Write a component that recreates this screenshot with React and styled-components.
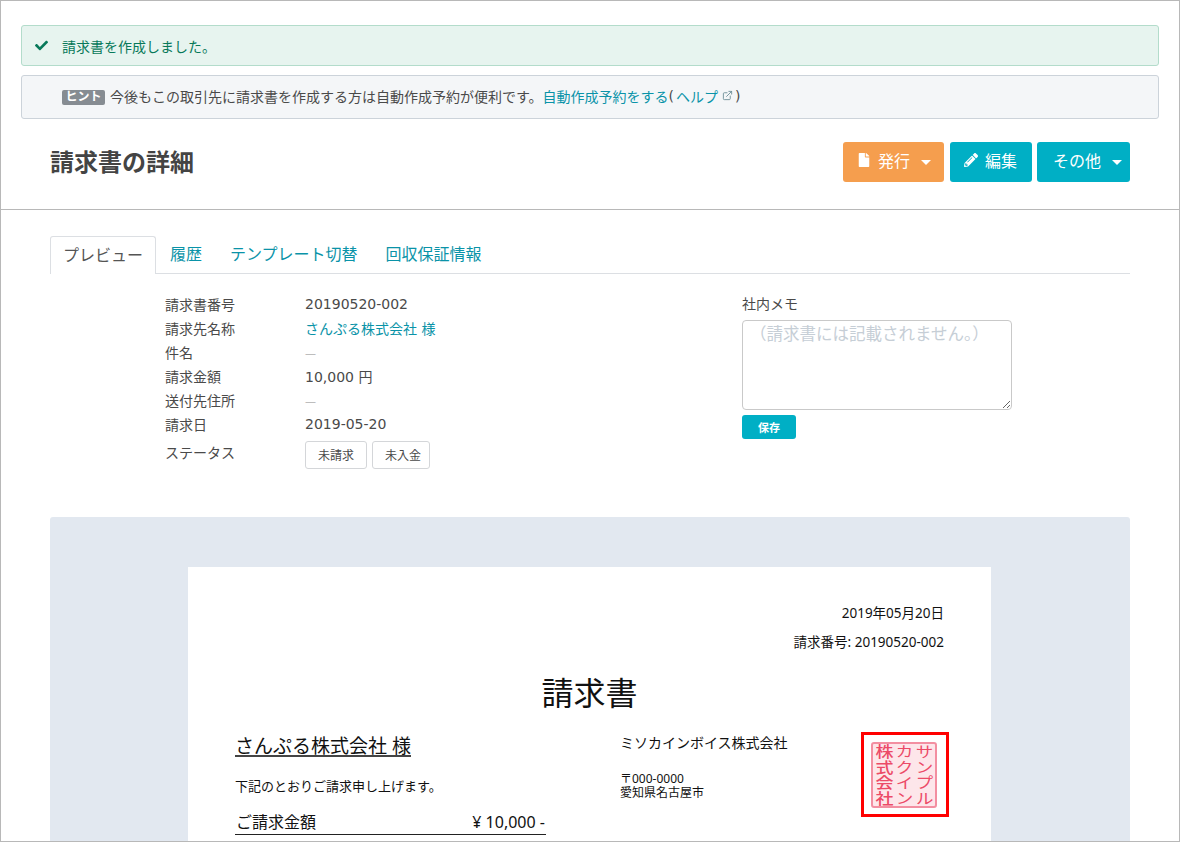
import styled, { createGlobalStyle } from 'styled-components';
import { FaCheck, FaFile, FaPencilAlt } from 'react-icons/fa';
import { ExternalLink } from 'lucide-react';

const GlobalStyle = createGlobalStyle`
  html, body {
    margin: 0;
    padding: 0;
    background: #fff;
  }
  body {
    font-family: "DejaVu Sans", "Noto Sans CJK JP", sans-serif;
    font-size: 14px;
    color: #4a4a4a;
  }
  * {
    box-sizing: border-box;
  }
`;

const Page = styled.div`
  width: 1180px;
  height: 842px;
  overflow: hidden;
  border: 1px solid #b8b8b8;
`;

const Top = styled.header`
  padding: 24px 20px 0;
  height: 209px;
  border-bottom: 1px solid #b8b8b8;
`;

const Alert = styled.div`
  display: flex;
  align-items: center;
  height: ${(p) => p.$height}px;
  margin-bottom: 9px;
  border-radius: 3px;
  font-size: 14px;
  border: 1px solid ${(p) => (p.$kind === 'success' ? '#b3dccb' : '#ccd3da')};
  background: ${(p) => (p.$kind === 'success' ? '#e7f4ef' : '#f4f6f8')};
  color: ${(p) => (p.$kind === 'success' ? '#08795a' : '#4a4a4a')};
  padding-left: ${(p) => (p.$kind === 'success' ? 13 : 40)}px;
  padding-bottom: ${(p) => (p.$kind === 'success' ? 0 : 3)}px;
`;

const CheckIcon = styled(FaCheck)`
  width: 13px;
  height: 13px;
  margin-right: 14px;
  color: #08795a;
`;

const HintBadge = styled.span`
  display: inline-block;
  background: #868c92;
  color: #fff;
  font-size: 12px;
  font-weight: 700;
  line-height: 15px;
  height: 15px;
  width: 43px;
  margin-top: 4px;
  text-align: center;
  border-radius: 2px;
  margin-right: 5px;
`;

const TextLink = styled.a`
  color: #0a93a8;
  text-decoration: none;
`;

const HelpLink = styled(TextLink)`
  margin-left: 2px;
`;

const ExternalIcon = styled(ExternalLink)`
  width: 11px;
  height: 11px;
  margin: 0 2px 0 4px;
  color: #6f8f98;
`;

const TitleRow = styled.div`
  display: flex;
  align-items: center;
  justify-content: space-between;
  padding: 14px 29px 0 29px;
`;

const Title = styled.h1`
  margin: 0 0 4px;
  font-size: 24px;
  font-weight: 700;
  color: #444;
`;

const Actions = styled.div`
  display: flex;
  gap: 5px;
`;

const Button = styled.button`
  display: flex;
  align-items: center;
  width: ${(p) => p.$width}px;
  height: 40px;
  border: 0;
  border-radius: 3px;
  margin-right: ${(p) => (p.$orange ? 1 : 0)}px;
  padding: 0 0 4px ${(p) => p.$left || 14}px;
  color: #fff;
  font-family: inherit;
  font-size: 16px;
  background: ${(p) => (p.$orange ? '#f59e4e' : '#00afc5')};
  svg {
    width: 14px;
    height: 14px;
    margin-right: 7px;
  }
`;

const Caret = styled.span`
  width: 0;
  height: 0;
  margin: 4px 0 0 11px;
  border-left: 5px solid transparent;
  border-right: 5px solid transparent;
  border-top: 5px solid #fff;
`;

const Body = styled.main`
  padding: 26px 49px 0;
`;

const Tabs = styled.nav`
  display: flex;
  height: 38px;
  border-bottom: 1px solid #dcdfe3;
`;

const Tab = styled.a`
  display: flex;
  align-items: center;
  height: ${(p) => (p.$active ? 38 : 37)}px;
  padding: 0 ${(p) => (p.$active ? 12 : 14)}px 3px;
  font-size: 16px;
  color: ${(p) => (p.$active ? '#555' : '#0a93a8')};
  background: #fff;
  border: ${(p) => (p.$active ? '1px solid #dcdfe3' : '0')};
  border-bottom: 0;
  border-radius: 3px 3px 0 0;
`;

const Summary = styled.section`
  display: flex;
  padding: 18px 0 0 115px;
  height: 243px;
`;

const Info = styled.dl`
  width: 577px;
  margin: 0;
  font-size: 14px;
`;

const InfoRow = styled.div`
  display: flex;
  align-items: center;
  height: 24px;
`;

const StatusRow = styled(InfoRow)`
  align-items: flex-start;
  height: 34px;
  margin-top: 5px;
`;

const InfoLabel = styled.dt`
  width: 140px;
`;

const StatusLabel = styled(InfoLabel)`
  line-height: 24px;
`;

const InfoValue = styled.dd`
  margin: 0;
  display: flex;
  gap: 5px;
`;

const Dash = styled.span`
  font-family: "Noto Sans", sans-serif;
  font-size: 11px;
  color: #8a8a8a;
  font-weight: 300;
`;

const Status = styled.span`
  display: flex;
  align-items: center;
  width: ${(p) => p.$width}px;
  height: 28px;
  padding: 0 0 1px 12px;
  font-size: 12px;
  border: 1px solid #d4d6d9;
  border-radius: 3px;
`;

const Memo = styled.div`
  display: flex;
  flex-direction: column;
  align-items: flex-start;
  font-size: 14px;
`;

const MemoLabel = styled.label`
  height: 24px;
  line-height: 24px;
  margin-bottom: 4px;
`;

const MemoInput = styled.textarea`
  width: 270px;
  height: 90px;
  padding: 0 7px;
  border: 1px solid #c9c9c9;
  border-radius: 4px;
  font-family: "Noto Sans CJK JP", sans-serif;
  font-size: 16.5px;
  margin-bottom: 5px;
  &::placeholder {
    color: #c6ced6;
  }
`;

const SaveButton = styled.button`
  width: 54px;
  height: 24px;
  border: 0;
  border-radius: 3px;
  background: #00afc5;
  color: #fff;
  font-family: inherit;
  font-size: 11px;
  font-weight: 700;
`;

const PreviewArea = styled.section`
  height: 330px;
  padding: 50px 139px 0 138px;
  background: #e2e8f0;
  border-radius: 3px 3px 0 0;
`;

const Sheet = styled.article`
  background: #fff;
  height: 280px;
  padding: 36px 47px 0;
  color: #111;
  font-family: "Noto Sans", "Noto Sans CJK JP", sans-serif;
`;

const SheetMeta = styled.p`
  margin: 0;
  height: 29px;
  text-align: right;
  font-size: 13.5px;
  line-height: 20px;
`;

const SheetTitle = styled.h2`
  margin: 9px 0 0;
  font-size: 32px;
  font-weight: 400;
  line-height: 46px;
  text-align: center;
`;

const Columns = styled.div`
  display: grid;
  grid-template-columns: 385px 1fr;
  margin-top: 16px;
`;

const Addressee = styled.div`
  display: flex;
  flex-direction: column;
  align-items: flex-start;
`;

const Customer = styled.h3`
  margin: 5px 0 0;
  font-size: 19px;
  font-weight: 400;
  line-height: 18px;
  border-bottom: 2px solid #444;
`;

const Greeting = styled.p`
  margin: 20px 0 0;
  font-size: 13px;
  line-height: 18px;
`;

const Amount = styled.div`
  display: flex;
  justify-content: space-between;
  width: 311px;
  margin-top: 15px;
  padding: 0 1px;
  font-size: 16px;
  line-height: 24px;
  border-bottom: 1px solid #222;
`;

const Issuer = styled.div`
  display: flex;
  justify-content: space-between;
  align-items: flex-start;
`;

const IssuerText = styled.div`
  padding-top: 2px;
`;

const IssuerName = styled.p`
  margin: 0 0 20px;
  font-size: 14px;
  line-height: 18px;
`;

const IssuerAddress = styled.p`
  margin: 0;
  font-size: 12px;
  line-height: 14px;
`;

const StampFrame = styled.div`
  display: flex;
  align-items: center;
  justify-content: center;
  width: 88px;
  height: 85px;
  margin-right: -5px;
  border: 3px solid #f00;
`;

const Stamp = styled.div`
  display: flex;
  flex-direction: row-reverse;
  justify-content: space-between;
  width: 66px;
  height: 66px;
  margin-right: 2px;
  padding: 0 1px;
  border: 2px solid #f38fa1;
  border-radius: 3px;
  background: #fde6ea;
`;

const StampLine = styled.span`
  writing-mode: vertical-rl;
  width: 20px;
  height: 62px;
  font-size: 15px;
  font-weight: ${(p) => (p.$heavy ? 500 : 400)};
  line-height: 20px;
  letter-spacing: 0.5px;
  color: #ec4a67;
  transform: scaleX(1.2);
`;

export default function App() {
  return (
    <Page>
      <GlobalStyle />
      <Top>
        <Alert $kind="success" $height={41}>
          <CheckIcon />
          請求書を作成しました。
        </Alert>
        <Alert $kind="hint" $height={44}>
          <HintBadge>ヒント</HintBadge>
          今後もこの取引先に請求書を作成する方は自動作成予約が便利です。
          <TextLink href="#">自動作成予約をする</TextLink>(
          <HelpLink href="#">ヘルプ</HelpLink>
          <ExternalIcon />)
        </Alert>
        <TitleRow>
          <Title>請求書の詳細</Title>
          <Actions>
            <Button $orange $width={101}>
              <FaFile />
              発行
              <Caret />
            </Button>
            <Button $width={82}>
              <FaPencilAlt />
              編集
            </Button>
            <Button $width={93} $left={16}>
              その他
              <Caret />
            </Button>
          </Actions>
        </TitleRow>
      </Top>
      <Body>
        <Tabs>
          <Tab $active>プレビュー</Tab>
          <Tab>履歴</Tab>
          <Tab>テンプレート切替</Tab>
          <Tab>回収保証情報</Tab>
        </Tabs>
        <Summary>
          <Info>
            <InfoRow>
              <InfoLabel>請求書番号</InfoLabel>
              <InfoValue>20190520-002</InfoValue>
            </InfoRow>
            <InfoRow>
              <InfoLabel>請求先名称</InfoLabel>
              <InfoValue>
                <TextLink href="#">さんぷる株式会社 様</TextLink>
              </InfoValue>
            </InfoRow>
            <InfoRow>
              <InfoLabel>件名</InfoLabel>
              <InfoValue>
                <Dash>—</Dash>
              </InfoValue>
            </InfoRow>
            <InfoRow>
              <InfoLabel>請求金額</InfoLabel>
              <InfoValue>10,000 円</InfoValue>
            </InfoRow>
            <InfoRow>
              <InfoLabel>送付先住所</InfoLabel>
              <InfoValue>
                <Dash>—</Dash>
              </InfoValue>
            </InfoRow>
            <InfoRow>
              <InfoLabel>請求日</InfoLabel>
              <InfoValue>2019-05-20</InfoValue>
            </InfoRow>
            <StatusRow>
              <StatusLabel>ステータス</StatusLabel>
              <InfoValue>
                <Status $width={62}>未請求</Status>
                <Status $width={58}>未入金</Status>
              </InfoValue>
            </StatusRow>
          </Info>
          <Memo>
            <MemoLabel>社内メモ</MemoLabel>
            <MemoInput placeholder="（請求書には記載されません。）" />
            <SaveButton>保存</SaveButton>
          </Memo>
        </Summary>
        <PreviewArea>
          <Sheet>
            <SheetMeta>2019年05月20日</SheetMeta>
            <SheetMeta>請求番号: 20190520-002</SheetMeta>
            <SheetTitle>請求書</SheetTitle>
            <Columns>
              <Addressee>
                <Customer>さんぷる株式会社 様</Customer>
                <Greeting>下記のとおりご請求申し上げます。</Greeting>
                <Amount>
                  <span>ご請求金額</span>
                  <span>¥ 10,000 -</span>
                </Amount>
              </Addressee>
              <Issuer>
                <IssuerText>
                  <IssuerName>ミソカインボイス株式会社</IssuerName>
                  <IssuerAddress>
                    〒000-0000
                    <br />
                    愛知県名古屋市
                  </IssuerAddress>
                </IssuerText>
                <StampFrame>
                  <Stamp>
                    <StampLine>サンプル</StampLine>
                    <StampLine>カクイン</StampLine>
                    <StampLine $heavy>株式会社</StampLine>
                  </Stamp>
                </StampFrame>
              </Issuer>
            </Columns>
          </Sheet>
        </PreviewArea>
      </Body>
    </Page>
  );
}
